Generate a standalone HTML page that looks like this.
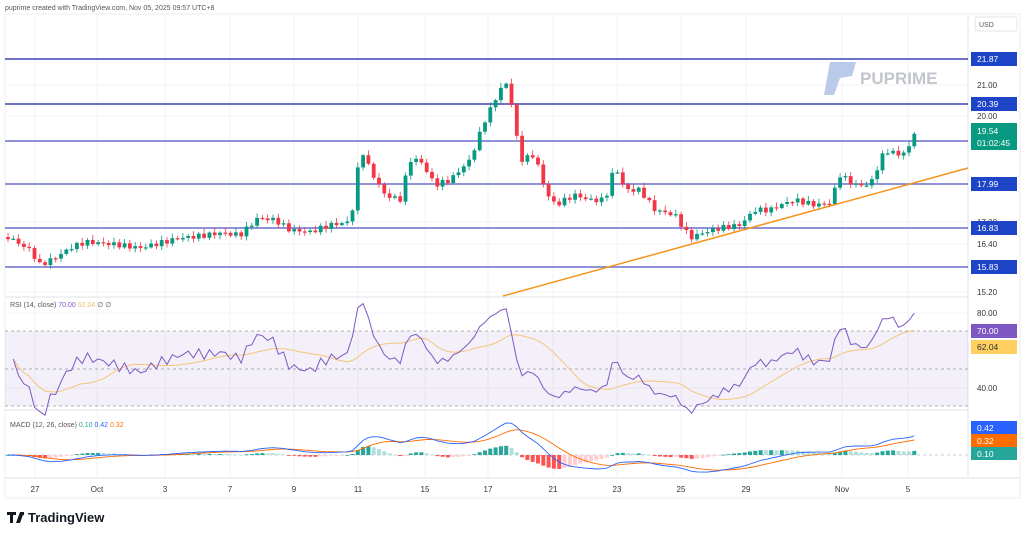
<!DOCTYPE html>
<html><head><meta charset="utf-8"><style>
body{margin:0;background:#fff;width:1024px;height:534px;overflow:hidden;font-family:"Liberation Sans",sans-serif}
svg text{font-family:"Liberation Sans",sans-serif}
</style></head><body>
<svg id="s" width="1024" height="534" viewBox="0 0 1024 534" xmlns="http://www.w3.org/2000/svg">
<rect width="1024" height="534" fill="#fff"/>
<text x="5" y="10" font-size="7" fill="#555">puprime created with TradingView.com, Nov 05, 2025 09:57 UTC+8</text>
<rect x="5" y="14" width="1015" height="484" fill="none" stroke="#eceef2"/>
<g id="grid" stroke="#f2f3f6" stroke-width="1"></g>
<line x1="5" y1="297" x2="968" y2="297" stroke="#e0e3eb"/>
<line x1="5" y1="410" x2="968" y2="410" stroke="#e0e3eb"/>
<line x1="5" y1="478" x2="1020" y2="478" stroke="#e0e3eb"/>
<line x1="968" y1="14" x2="968" y2="478" stroke="#e0e3eb"/>
<path d="M830 62 L856 62 L852 76 L840 78 L834 95 L824 95 Z" fill="#b9cbe8"/>
<text x="860" y="84" font-size="17" font-weight="bold" fill="#c2c6cc">PUPRIME</text>
<rect x="975" y="17" width="42" height="14" rx="2" fill="#fff" stroke="#e0e3eb"/>
<text x="979" y="27" font-size="7" fill="#555">USD</text>
<rect x="5" y="331" width="963" height="75" fill="#7e57c2" fill-opacity="0.09"/>
<line x1="5" y1="331" x2="968" y2="331" stroke="#9598a1" stroke-dasharray="3,3" stroke-width="0.8"/>
<line x1="5" y1="369" x2="968" y2="369" stroke="#9598a1" stroke-dasharray="3,3" stroke-width="0.8"/>
<line x1="5" y1="406" x2="968" y2="406" stroke="#9598a1" stroke-dasharray="3,3" stroke-width="0.8"/>
<line x1="5" y1="455" x2="968" y2="455" stroke="#b0c4c8" stroke-dasharray="3,3" stroke-width="0.8"/>
<g id="hl"></g>
<g id="candles"></g>
<line x1="503" y1="296" x2="968" y2="168" stroke="#f7931a" stroke-width="1.5"/>
<g id="ind"></g>
<text x="10" y="307" font-size="7" fill="#555">RSI (14, close) <tspan fill="#7e57c2">70.00</tspan> <tspan fill="#e6c36a">62.04</tspan> ∅ ∅</text>
<text x="10" y="427" font-size="7" fill="#555">MACD (12, 26, close) <tspan fill="#22ab94">0.10</tspan> <tspan fill="#2962ff">0.42</tspan> <tspan fill="#ff6d00">0.32</tspan></text>
<g font-size="8" fill="#333">
<text x="977" y="88">21.00</text><text x="977" y="119">20.00</text><text x="977" y="225">17.00</text>
<text x="977" y="247">16.40</text><text x="977" y="295">15.20</text>
<text x="977" y="316">80.00</text><text x="977" y="391">40.00</text>
</g>
<g font-size="8" fill="#333" text-anchor="middle">
<text x="35" y="492">27</text><text x="97" y="492">Oct</text><text x="165" y="492">3</text><text x="230" y="492">7</text><text x="294" y="492">9</text><text x="358" y="492">11</text><text x="425" y="492">15</text><text x="488" y="492">17</text><text x="553" y="492">21</text><text x="617" y="492">23</text><text x="681" y="492">25</text><text x="746" y="492">29</text><text x="842" y="492">Nov</text><text x="908" y="492">5</text>
</g>
<g id="labels" font-size="8.5" fill="#fff"></g>
<rect x="971" y="123" width="46" height="27" fill="#089981"/>
<text x="977" y="134" font-size="8.5" fill="#fff">19.54</text>
<text x="977" y="146" font-size="8.5" fill="#fff">01:02:45</text>
<rect x="971" y="324" width="46" height="14" fill="#7e57c2"/><text x="977" y="334" font-size="8.5" fill="#fff">70.00</text>
<rect x="971" y="340" width="46" height="14" fill="#ffd060"/><text x="977" y="350" font-size="8.5" fill="#333">62.04</text>
<rect x="971" y="421" width="46" height="13" fill="#2962ff"/><text x="977" y="431" font-size="8.5" fill="#fff">0.42</text>
<rect x="971" y="434" width="46" height="13" fill="#ff6d00"/><text x="977" y="444" font-size="8.5" fill="#fff">0.32</text>
<rect x="971" y="447" width="46" height="13" fill="#26a69a"/><text x="977" y="457" font-size="8.5" fill="#fff">0.10</text>
<g transform="translate(7,512)"><path d="M0 0h9v3h-3v8h-3v-8h-3z M9 11l4-11h4l-4 11z M14 0h3v3h-3z" fill="#131722"/></g>
<text x="28" y="522" font-size="13" font-weight="bold" fill="#131722">TradingView</text>
</svg>
<script>
var NS="http://www.w3.org/2000/svg";
function el(p,t,a){var e=document.createElementNS(NS,t);for(var k in a)e.setAttribute(k,a[k]);p.appendChild(e);return e;}
var grid=document.getElementById('grid');
[35,97,165,230,294,358,425,488,553,617,681,746,842,908].forEach(function(x){el(grid,'line',{x1:x,y1:14,x2:x,y2:478});});
[85,116,222,244,292,313,388].forEach(function(y){el(grid,'line',{x1:5,y1:y,x2:968,y2:y});});
var hl=document.getElementById('hl'),lb=document.getElementById('labels');
[[59,"21.87"],[104,"20.39"],[141,"19.27"],[184,"17.99"],[228,"16.83"],[267,"15.83"]].forEach(function(a,i){
el(hl,'line',{x1:5,y1:a[0],x2:968,y2:a[0],stroke:i<2?'#3f44b0':'#6a6fcc','stroke-width':1.6});
el(lb,'rect',{x:971,y:a[0]-7,width:46,height:14,fill:'#1e44c8'});
var t=el(lb,'text',{x:977,y:a[0]+3});t.textContent=a[1];});
var pts=[[8,237],[30,250],[40,265],[55,258],[70,248],[85,242],[100,243],[120,245],[140,248],[160,243],[180,238],[200,236],[220,233],[240,235],[258,218],[275,220],[290,230],[310,232],[330,225],[350,222],[356,190],[360,145],[370,170],[385,195],[400,200],[410,160],[420,160],[435,185],[450,180],[470,160],[485,120],[495,100],[505,80],[512,105],[520,160],[535,155],[545,190],[555,205],[575,195],[590,200],[605,200],[615,165],[625,190],[640,190],[655,210],[675,215],[690,238],[705,232],[720,228],[740,225],[755,210],[770,210],[780,205],[795,200],[815,205],[830,203],[840,175],[855,185],[870,185],[885,150],[900,155],[908,150],[915,130]];
function interp(x){for(var i=1;i<pts.length;i++){if(x<=pts[i][0]){var a=pts[i-1],b=pts[i];return a[1]+(b[1]-a[1])*(x-a[0])/(b[0]-a[0]);}}return pts[pts.length-1][1];}
var cg=document.getElementById('candles');var closes=[],xs=[];var prev=interp(8);
for(var x=8;x<=916;x+=5.3){var c=interp(x)+Math.sin(x*1.7)*2.5;var o=prev;prev=c;xs.push(x);closes.push(c);
var up=c<o;var col=up?'#089981':'#f23645';var hi=Math.min(o,c)-1-Math.abs(Math.sin(x*0.9))*4,lo=Math.max(o,c)+1+Math.abs(Math.cos(x*1.3))*3;
el(cg,'line',{x1:x,y1:hi,x2:x,y2:lo,stroke:col,'stroke-width':0.8});
el(cg,'rect',{x:x-1.9,y:Math.min(o,c),width:3.8,height:Math.max(1.2,Math.abs(c-o)),fill:col});}
var P=closes.map(function(y){return 30-y/10;});
var ind=document.getElementById('ind');var ag=0.12,al=0.1,rsi=[];
for(var i=1;i<P.length;i++){var d=P[i]-P[i-1];var g=Math.max(d,0),l=Math.max(-d,0);ag=(ag*13+g)/14;al=(al*13+l)/14;rsi.push(100-100/(1+ag/al));}
function ry(v){return 369-(v-50)*1.875;}
var sma=[],d1="",d2="";for(var i=0;i<rsi.length;i++){var s=0,n=0;for(var j=Math.max(0,i-13);j<=i;j++){s+=rsi[j];n++;}sma.push(s/n);
d1+=(i?"L":"M")+xs[i+1].toFixed(1)+" "+ry(rsi[i]).toFixed(1);d2+=(i?"L":"M")+xs[i+1].toFixed(1)+" "+ry(sma[i]).toFixed(1);}
el(ind,'path',{d:d2,fill:'none',stroke:'#f5c57a','stroke-width':1});
el(ind,'path',{d:d1,fill:'none',stroke:'#7e57c2','stroke-width':1});
function ema(a,n){var k=2/(n+1),r=[a[0]];for(var i=1;i<a.length;i++)r.push(a[i]*k+r[i-1]*(1-k));return r;}
var e12=ema(P,12),e26=ema(P,26),m=e12.map(function(v,i){return v-e26[i];}),sg=ema(m,9);
var mx=0;m.forEach(function(v){mx=Math.max(mx,Math.abs(v));});var sc=32/mx;
var dm="",ds="";for(var i=0;i<m.length;i++){var h=(m[i]-sg[i])*sc;var ph=i?(m[i-1]-sg[i-1])*sc:0;var col=h>=0?(h>=ph?'#26a69a':'#b2dfdb'):(h<=ph?'#ff5252':'#ffcdd2');
el(ind,'rect',{x:xs[i]-2,y:Math.min(455,455-h),width:4,height:Math.max(0.8,Math.abs(h)),fill:col});
dm+=(i?"L":"M")+xs[i].toFixed(1)+" "+(455-m[i]*sc).toFixed(1);ds+=(i?"L":"M")+xs[i].toFixed(1)+" "+(455-sg[i]*sc).toFixed(1);}
el(ind,'path',{d:ds,fill:'none',stroke:'#ff6d00','stroke-width':0.9});
el(ind,'path',{d:dm,fill:'none',stroke:'#2962ff','stroke-width':0.9});
</script>
</body></html>
